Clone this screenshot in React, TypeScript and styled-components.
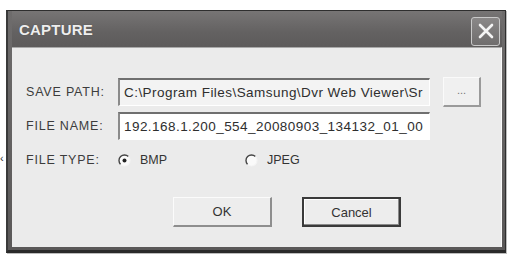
import React from "react";
import styled, { createGlobalStyle } from "styled-components";

const Global = createGlobalStyle`
  html, body { margin: 0; padding: 0; background: #ffffff; }
  body { font-family: "Liberation Sans", Arial, sans-serif; }
`;

const Page = styled.div`
  position: relative;
  width: 509px;
  height: 256px;
  padding: 10px 0 0 6px;
  box-sizing: border-box;
  overflow: hidden;
`;

const Stray = styled.span`
  position: absolute;
  left: 0px;
  top: 152px;
  font: 11px "Liberation Sans", sans-serif;
  color: #333;
`;

const Window = styled.div`
  width: 500px;
  height: 243px;
  box-sizing: border-box;
  background: linear-gradient(#6e6c6c, #5a5858);
  border: 1px solid #2e2e2e;
  border-bottom: 3px solid #2a2a2a;
  border-left: 2px solid #3a3a3a;
  padding: 0 3px 3px 4px;
  display: flex;
  flex-direction: column;
  box-shadow: 1px 1px 0 #bdbdbd;
`;

const TitleBar = styled.div`
  height: 36px;
  display: flex;
  align-items: center;
  justify-content: space-between;
  padding: 0 2px 0 7px;
  background: linear-gradient(#777575, #636161 60%, #5d5b5b);
`;

const Title = styled.span`
  font: bold 15px "Liberation Sans", Arial, sans-serif;
  color: #eeeeee;
  letter-spacing: 0.2px;
  text-shadow: 0 0 1px #444;
`;

const CloseButton = styled.div`
  width: 27px;
  height: 27px;
  margin-top: 4px;
  border: 1px solid #c9c9c9;
  border-radius: 3px;
  background: linear-gradient(#8a8888, #6f6d6d);
  display: flex;
  align-items: center;
  justify-content: center;
`;

const Client = styled.div`
  flex: 1;
  background: #ebebeb;
  border-top: 1px solid #a9a9a9;
  border-right: 1px solid #fafafa;
  padding: 29px 0 0 14px;
  display: flex;
  flex-direction: column;
  color: #3a3a3a;
`;

const Row = styled.div<{ $mt?: number; $h: number }>`
  display: flex;
  align-items: center;
  height: ${(p) => p.$h}px;
  margin-top: ${(p) => p.$mt ?? 0}px;
`;

const Label = styled.span`
  width: 92px;
  flex: none;
  font: 12.5px "Liberation Sans", Arial, sans-serif;
  color: #3c3c3c;
  letter-spacing: 0.8px;
`;

const Field = styled.div<{ $bg: string }>`
  width: 312px;
  height: 28px;
  box-sizing: border-box;
  background: ${(p) => p.$bg};
  border-top: 2px solid #6f6f6f;
  border-left: 2px solid #8a8a8a;
  border-right: 1px solid #ffffff;
  border-bottom: 1px solid #ffffff;
  padding: 0 0 0 4px;
  display: flex;
  align-items: center;
  overflow: hidden;
  white-space: nowrap;
  font: 13.5px "Liberation Sans", Arial, sans-serif;
  letter-spacing: 0.45px;
  color: #2e2e2e;
`;

const SmallButton = styled.div`
  margin-left: 13px;
  width: 38px;
  height: 30px;
  box-sizing: border-box;
  background: #f0f0f0;
  border-top: 1px solid #fafafa;
  border-left: 1px solid #fafafa;
  border-right: 2px solid #9a9a9a;
  border-bottom: 2px solid #9a9a9a;
  display: flex;
  align-items: center;
  justify-content: center;
  font: 11px "Liberation Sans", Arial, sans-serif;
  color: #777;
  padding-bottom: 3px;
`;

const Option = styled.label<{ $w: number }>`
  width: ${(p) => p.$w}px;
  display: flex;
  align-items: center;
  gap: 9px;
  font: 12.5px "Liberation Sans", Arial, sans-serif;
  color: #333;
`;

const Buttons = styled.div`
  display: flex;
  gap: 30px;
  margin-top: 28px;
  padding-left: 147px;
`;

const PushButton = styled.div<{ $default?: boolean }>`
  width: 99px;
  height: 30px;
  box-sizing: border-box;
  background: #ededed;
  display: flex;
  align-items: center;
  justify-content: center;
  font: 13px "Liberation Sans", Arial, sans-serif;
  color: #333;
  ${(p) =>
    p.$default
      ? `border: 2px solid #3a3a3a; box-shadow: inset -1px -1px 0 #8a8a8a, inset 1px 1px 0 #fff;`
      : `border-top: 1px solid #fbfbfb; border-left: 1px solid #fbfbfb; border-right: 2px solid #8e8e8e; border-bottom: 2px solid #8e8e8e;`}
`;

const Radio = ({ checked }: { checked?: boolean }) => (
  <svg width="13" height="13" viewBox="0 0 13 13">
    <circle cx="6.5" cy="6.5" r="5.5" fill="#fafafa" />
    <path d="M10.4 2.6 A5.5 5.5 0 0 0 2.6 10.4" fill="none" stroke="#444" strokeWidth="1.4" />
    <path d="M2.6 10.4 A5.5 5.5 0 0 0 10.4 2.6" fill="none" stroke="#f4f4f4" strokeWidth="1.2" />
    {checked && <circle cx="6.5" cy="6.5" r="2" fill="#222" />}
  </svg>
);

export default function App() {
  return (
    <>
      <Global />
      <Page>
        <Stray>‹</Stray>
        <Window>
          <TitleBar>
            <Title>CAPTURE</Title>
            <CloseButton>
              <svg width="16" height="16" viewBox="0 0 16 16">
                <path d="M2 2 L14 14 M14 2 L2 14" stroke="#f4f4f4" strokeWidth="2.6" strokeLinecap="round" />
              </svg>
            </CloseButton>
          </TitleBar>
          <Client>
            <Row $h={30}>
              <Label>SAVE PATH:</Label>
              <Field $bg="#f3f3f3">C:\Program Files\Samsung\Dvr Web Viewer\Sr</Field>
              <SmallButton>...</SmallButton>
            </Row>
            <Row $h={28} $mt={5}>
              <Label>FILE NAME:</Label>
              <Field $bg="#ffffff">192.168.1.200_554_20080903_134132_01_00</Field>
            </Row>
            <Row $h={18} $mt={11}>
              <Label>FILE TYPE:</Label>
              <Option $w={127}>
                <Radio checked />
                BMP
              </Option>
              <Option $w={80}>
                <Radio />
                JPEG
              </Option>
            </Row>
            <Buttons>
              <PushButton>OK</PushButton>
              <PushButton $default>Cancel</PushButton>
            </Buttons>
          </Client>
        </Window>
      </Page>
    </>
  );
}
